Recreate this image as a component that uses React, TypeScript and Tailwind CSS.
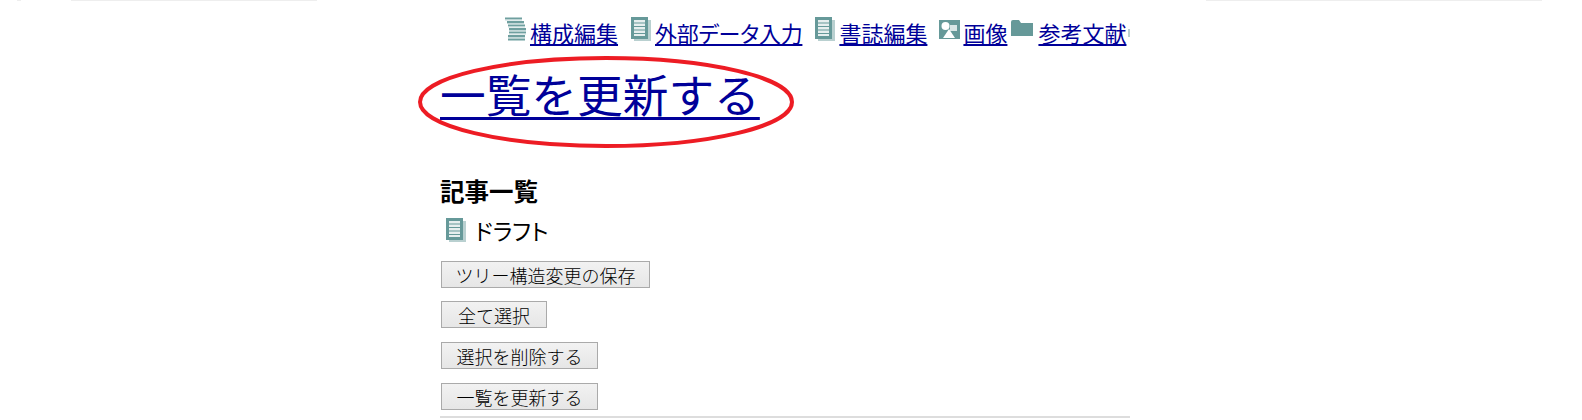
const linkClass = "text-[22px] leading-[26px] text-[#000099] underline decoration-2 underline-offset-[2px] whitespace-nowrap [font-feature-settings:'palt']";

function TreeIcon() {
  return (
    <svg width="22" height="24" viewBox="0 0 22 24" className="shrink-0">
      <path d="M1 1.500h17M3 5h17M4 8.500h17M5 12h17M5 15.500h17M4 19h17M4 22.500h17" stroke="#6f9f9f" strokeWidth="2" fill="none" />
      <path d="M1 3h17M3 6.500h17M4 10h17M5 13.500h17M5 17h17M4 20.500h17" stroke="#c4d8d8" strokeWidth="1" fill="none" />
    </svg>
  );
}

function DocIcon() {
  return (
    <svg width="20" height="24" viewBox="0 0 20 24" className="shrink-0">
      <rect x="3" y="3" width="17" height="21" fill="#b9d0d0" />
      <rect x="0" y="0" width="17" height="22" fill="#669999" />
      <rect x="3" y="3" width="11" height="16" fill="#e6eeee" />
      <path d="M3 6h11M3 9.500h11M3 13h11M3 16.500h11" stroke="#669999" strokeWidth="1" />
    </svg>
  );
}

function ImageIcon() {
  return (
    <svg width="21" height="19" viewBox="0 0 21 19" className="shrink-0">
      <rect width="21" height="19" fill="#669999" />
      <circle cx="6.500" cy="6" r="4" fill="#fff" />
      <rect x="11" y="5" width="7" height="6" fill="#d9e6e6" />
      <path d="M10 9 16 18H4Z" fill="#fff" />
    </svg>
  );
}

function FolderIcon() {
  return (
    <svg width="22" height="16" viewBox="0 0 22 16" className="shrink-0">
      <path d="M0 2Q0 0 2 0H8L10 3H22V16H0Z" fill="#669999" />
    </svg>
  );
}

function Button({ label, width, top }: { label: string; width: string; top: string }) {
  return (
    <button
      className={`block h-[27px] ${width} ${top} border border-[#aaaaaa] bg-gradient-to-b from-[#f2f2f2] to-[#e6e6e6] text-[18px] font-light leading-[24px] text-black whitespace-nowrap`}
    >
      {label}
    </button>
  );
}

export default function App() {
  return (
    <div className="h-[420px] w-[1582px] overflow-hidden bg-white font-['Noto_Sans_CJK_JP',sans-serif]">
      <div className="flex h-px">
        <div className="ml-[17px] w-[4px] bg-[#eeeeee]" />
        <div className="ml-[50px] w-[246px] bg-[#eeeeee]" />
        <div className="ml-[889px] w-[336px] bg-[#eeeeee]" />
      </div>

      <div className="ml-[440px] w-[690px]">
        <nav className="flex h-[55px] overflow-hidden pl-[64px] pt-[16px]">
          <TreeIcon />
          <a className={`ml-[4px] mt-[2px] ${linkClass}`}>構成編集</a>
          <div className="ml-[13px]"><DocIcon /></div>
          <a className={`ml-[4px] mt-[2px] tracking-[-0.3px] ${linkClass}`}>外部データ入力</a>
          <div className="ml-[13px]"><DocIcon /></div>
          <a className={`ml-[4px] mt-[2px] ${linkClass}`}>書誌編集</a>
          <div className="ml-[12px] mt-[3px]"><ImageIcon /></div>
          <a className={`ml-[3px] mt-[2px] ${linkClass}`}>画像</a>
          <div className="ml-[4px] mt-[3px]"><FolderIcon /></div>
          <a className={`ml-[5px] mt-[2px] ${linkClass}`}>参考文献</a>
          <div className="ml-[2px] mt-[12px] h-[8px] w-[2px] shrink-0 bg-[#b9d0d0]" />
        </nav>

        <div className="relative h-[117px]">
          <a className="block w-fit pt-[4px] text-[45.7px] leading-[66px] text-[#000099] underline decoration-[3px] underline-offset-[4px] whitespace-nowrap">
            一覧を更新する
          </a>
          <svg width="380" height="96" viewBox="0 0 380 96" className="absolute left-[-24px] top-[-1px]">
            <ellipse cx="190" cy="47" rx="186" ry="44" fill="none" stroke="#ed1c24" strokeWidth="4" />
          </svg>
        </div>

        <h2 className="h-[32px] text-[24.5px] font-bold leading-[36px] text-black">記事一覧</h2>

        <div className="mt-[12px] flex h-[28px] items-start pl-[6px]">
          <div className="mt-px"><DocIcon /></div>
          <span className="ml-[9px] text-[22.5px] leading-[26px] text-black [font-feature-settings:'palt']">ドラフト</span>
        </div>

        <div className="mt-[16px] flex flex-col pl-px">
          <Button label="ツリー構造変更の保存" width="w-[209px]" top="mt-0" />
          <Button label="全て選択" width="w-[106px]" top="mt-[13px]" />
          <Button label="選択を削除する" width="w-[157px]" top="mt-[14px]" />
          <Button label="一覧を更新する" width="w-[157px]" top="mt-[14px]" />
        </div>

        <hr className="mt-[6px] border-t-2 border-[#dddddd]" />
      </div>
    </div>
  );
}
